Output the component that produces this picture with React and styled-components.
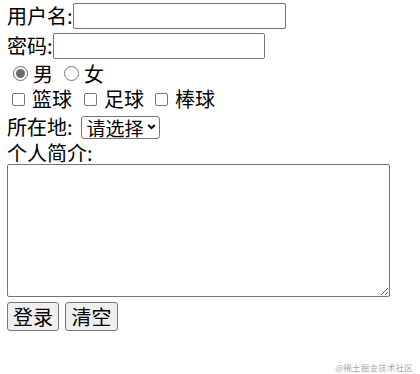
import React from 'react';
import styled, { createGlobalStyle } from 'styled-components';

const GlobalStyle = createGlobalStyle`
  html, body {
    margin: 0;
    padding: 0;
    background: #fff;
  }
  body {
    font-family: "Noto Sans CJK SC", "Liberation Sans", sans-serif;
    font-size: 20px;
    line-height: 1;
    color: #000;
  }
`;

const Form = styled.form`
  width: 420px;
  height: 374px;
  padding: 0 0 0 7px;
  box-sizing: border-box;
  display: flex;
  flex-direction: column;
  position: relative;
`;

const Row = styled.div`
  display: flex;
  align-items: ${props => props.align || 'center'};
  height: ${props => props.h}px;
  gap: ${props => props.gap || 0}px;
  padding-top: ${props => props.pt || 0}px;
  box-sizing: border-box;
  white-space: nowrap;
`;

const Label = styled.span`
  line-height: 1;
`;

const TextInput = styled.input`
  box-sizing: border-box;
  width: ${props => props.w}px;
  height: 26px;
  margin: 0;
  border: 1px solid #767676;
  border-radius: 2px;
  padding: 1px 2px;
  font: inherit;
  outline: none;
`;

const Choice = styled.label`
  display: flex;
  align-items: center;
  gap: ${props => props.gap}px;
  margin-left: ${props => props.ml}px;
  line-height: 1;
`;

const Radio = styled.span`
  box-sizing: border-box;
  width: 15px;
  height: 15px;
  border-radius: 50%;
  border: 1px solid ${props => (props.checked ? '#6b6b6b' : '#767676')};
  display: flex;
  align-items: center;
  justify-content: center;
  &::after {
    content: '';
    width: 9px;
    height: 9px;
    border-radius: 50%;
    background: ${props => (props.checked ? '#6b6b6b' : 'transparent')};
  }
`;

const Check = styled.span`
  box-sizing: border-box;
  width: 13px;
  height: 13px;
  border: 1px solid #767676;
  border-radius: 2px;
  background: #fff;
`;

const Select = styled.div`
  box-sizing: border-box;
  height: 23px;
  width: 79px;
  margin-left: 8px;
  border: 1px solid #767676;
  border-radius: 3px;
  display: flex;
  align-items: center;
  padding: 0 3px 0 5px;
  gap: 3px;
  font-size: 19px;
`;

const Area = styled.textarea`
  display: block;
  box-sizing: border-box;
  width: 383px;
  height: 133px;
  margin: 0;
  border: 1px solid #767676;
  border-radius: 2px;
  resize: both;
  font: inherit;
  outline: none;
  flex: none;
`;

const Button = styled.button`
  box-sizing: border-box;
  height: 29px;
  width: ${props => props.w}px;
  padding: 0;
  background: #efefef;
  border: 1px solid #767676;
  border-radius: 3px;
  font-family: inherit;
  font-size: 20px;
  color: #000;
  line-height: 1;
`;

const Watermark = styled.div`
  position: absolute;
  right: 7px;
  bottom: 3px;
  font-size: 8.5px;
  color: #a8a8a8;
  letter-spacing: 0.2px;
`;

export default function App() {
  return (
    <>
      <GlobalStyle />
      <Form onSubmit={e => e.preventDefault()}>
        <Row h={31}>
          <Label>用户名:</Label>
          <TextInput w={213} />
        </Row>
        <Row h={30}>
          <Label>密码:</Label>
          <TextInput w={212} />
        </Row>
        <Row h={25}>
          <Choice gap={5} ml={6}>
            <Radio checked />男
          </Choice>
          <Choice gap={5} ml={11}>
            <Radio />女
          </Choice>
        </Row>
        <Row h={26}>
          <Choice gap={7} ml={5}>
            <Check />篮球
          </Choice>
          <Choice gap={7} ml={12}>
            <Check />足球
          </Choice>
          <Choice gap={7} ml={11}>
            <Check />棒球
          </Choice>
        </Row>
        <Row h={30}>
          <Label>所在地:</Label>
          <Select>
            请选择
            <svg width="11" height="8" viewBox="0 0 11 8">
              <path d="M1.5 1.5 L5.5 5.5 L9.5 1.5" fill="none" stroke="#000" strokeWidth="2.4" />
            </svg>
          </Select>
        </Row>
        <Row h={22}>
          <Label>个人简介:</Label>
        </Row>
        <Area />
        <Row h={40} gap={6} align="flex-start" pt={5}>
          <Button w={52} type="submit">登录</Button>
          <Button w={53} type="reset">清空</Button>
        </Row>
        <Watermark>@稀土掘金技术社区</Watermark>
      </Form>
    </>
  );
}
